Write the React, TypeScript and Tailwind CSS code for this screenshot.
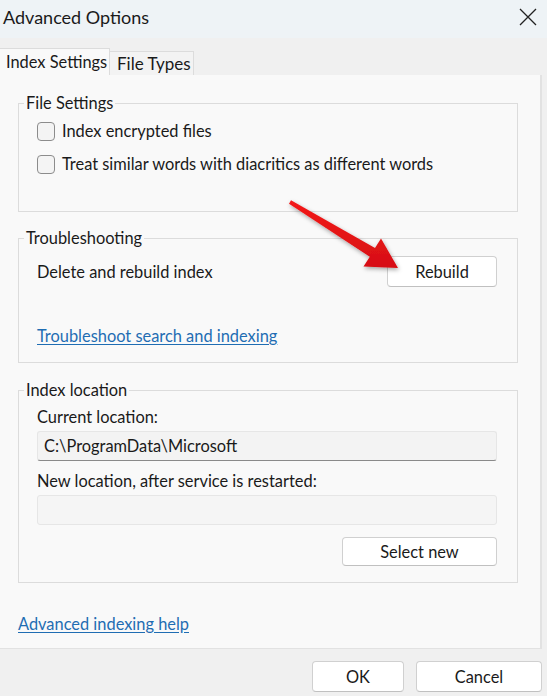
import React from 'react';

const font = { fontFamily: 'Lato, "Noto Sans", sans-serif' };

function Checkbox({ label }: { label: string }) {
  return (
    <label className="flex items-center gap-[7px] h-[20px]">
      <span className="w-[18px] h-[19px] rounded-[4px] border border-[#8c8c8c] bg-[#f4f4f4]" />
      <span>{label}</span>
    </label>
  );
}

function Button({ children, className = '' }: { children: React.ReactNode; className?: string }) {
  return (
    <button
      className={
        'flex items-center justify-center rounded-[4px] border border-[#d0d0d0] border-b-[#c0c0c0] bg-white text-[16.4px] text-[#1a1a1a] ' +
        className
      }
    >
      {children}
    </button>
  );
}

function Group({ title, className = '', children }: { title: string; className?: string; children: React.ReactNode }) {
  return (
    <fieldset className={'border border-[#dcdcdc] px-[18px] ' + className}>
      <legend className="-ml-[13px] px-[2px] h-[20px] leading-[20px]">{title}</legend>
      {children}
    </fieldset>
  );
}

export default function App() {
  return (
    <div
      className="relative w-[547px] h-[696px] bg-[#f0f0f0] text-[16.4px] leading-[20px] text-[#1a1a1a] overflow-hidden"
      style={font}
    >
      {/* title bar */}
      <div className="h-[38px] bg-[#eef3f6] flex items-center justify-between pl-[3px] pr-[10px]">
        <span className="text-[18px] -mt-[4px]">Advanced Options</span>
        <svg width="18" height="18" viewBox="0 0 18 18" className="-mt-[4px]">
          <path d="M1 1 L17 17 M17 1 L1 17" stroke="#222" strokeWidth="1.3" />
        </svg>
      </div>

      {/* tabs */}
      <div className="flex items-end h-[37px] pt-[10px]">
        <div className="h-[27px] w-[110px] bg-[#f9f9f9] border-t border-r border-[#dcdcdc] pl-[6px] flex items-center">
          Index Settings
        </div>
        <div className="h-[24px] w-[84px] bg-[#f3f3f3] border-t border-r border-[#dcdcdc] pl-[7px] flex items-center text-[17px]">
          File Types
        </div>
      </div>

      {/* panel */}
      <div className="w-[542px] h-[574px] bg-[#f9f9f9] border-r-2 border-b border-[#e2e2e2] pl-[18px] pt-[18px]">
        <Group title="File Settings" className="w-[500px] h-[119px]">
          <div className="flex flex-col gap-[13px] pt-[8px]">
            <Checkbox label="Index encrypted files" />
            <Checkbox label="Treat similar words with diacritics as different words" />
          </div>
        </Group>

        <Group title="Troubleshooting" className="w-[500px] h-[135px] mt-[16px]">
          <div className="flex items-center justify-between pt-[8px] pr-[2px]">
            <span>Delete and rebuild index</span>
            <Button className="w-[110px] h-[31px]">Rebuild</Button>
          </div>
          <a href="#" className="block mt-[39px] w-fit text-[#1f6db3] underline underline-offset-2">
            Troubleshoot search and indexing
          </a>
        </Group>

        <Group title="Index location" className="w-[500px] h-[203px] mt-[17px]">
          <div className="pt-[7px]">Current location:</div>
          <div className="mt-[4px] h-[30px] w-[460px] bg-[#f3f3f3] border border-[#e6e6e6] border-b-[#8a8a8a] rounded-[3px] pl-[6px] flex items-center">
            C:\ProgramData\Microsoft
          </div>
          <div className="mt-[10px]">New location, after service is restarted:</div>
          <div className="mt-[4px] h-[30px] w-[460px] bg-[#f5f5f5] border border-[#e6e6e6] rounded-[3px]" />
          <div className="flex justify-end pr-[2px] mt-[12px]">
            <Button className="w-[155px] h-[29px]">Select new</Button>
          </div>
        </Group>

        <a href="#" className="block mt-[31px] w-fit text-[#1f6db3] underline underline-offset-2">
          Advanced indexing help
        </a>
      </div>

      {/* footer */}
      <div className="flex justify-end gap-[12px] pt-[12px] pr-[5px]">
        <Button className="w-[92px] h-[31px] border-[#2b5f8f] border-b-[#2b5f8f]">OK</Button>
        <Button className="w-[126px] h-[31px]">Cancel</Button>
      </div>

      {/* red arrow annotation */}
      <svg
        width="547"
        height="696"
        viewBox="0 0 547 696"
        className="absolute left-0 top-0 pointer-events-none"
      >
        <defs>
          <linearGradient id="arrowFill" x1="0" y1="0" x2="0" y2="1">
            <stop offset="0" stopColor="#f31a1a" />
            <stop offset="1" stopColor="#d60f12" />
          </linearGradient>
          <filter id="arrowShadow" x="-20%" y="-20%" width="140%" height="140%">
            <feDropShadow dx="1" dy="2" stdDeviation="2" floodColor="#000" floodOpacity="0.35" />
          </filter>
        </defs>
        <polygon
          points="291,200.3 375,248.1 381,238.5 398,268 363.5,266.5 369.8,256.7 289,203.7"
          fill="url(#arrowFill)"
          filter="url(#arrowShadow)"
        />
      </svg>
    </div>
  );
}
